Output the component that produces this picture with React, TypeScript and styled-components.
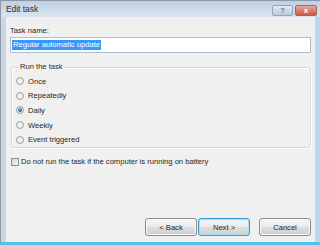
import styled, { createGlobalStyle } from "styled-components";

const GlobalStyle = createGlobalStyle`
  html, body {
    margin: 0;
    padding: 0;
  }
  body {
    width: 320px;
    height: 245px;
    overflow: hidden;
    background: #ffffff;
    font-family: "Liberation Sans", Arial, sans-serif;
  }
`;

const Window = styled.div`
  width: 320px;
  height: 245px;
  box-sizing: border-box;
  display: flex;
  flex-direction: column;
  background: linear-gradient(90deg, #c9d6e4 0%, #d3e0ee 60%, #bcd6ee 100%);
  border-top: 1px solid #8c99a8;
  border-left: 1px solid #8f9aa6;
  border-bottom: 3px solid #4fc4e9;
`;

const TitleBar = styled.div`
  height: 16px;
  display: flex;
  align-items: center;
  justify-content: space-between;
  padding: 0 3px 0 5px;
  background: linear-gradient(180deg, #c0d0e2 0%, #d8e4f1 100%);
`;

const Title = styled.span`
  font-size: 8.4px;
  color: #1e2a36;
`;

const CaptionButtons = styled.div`
  display: flex;
  gap: 2px;
  margin-top: 3px;
`;

const CaptionButton = styled.div<{ $close?: boolean }>`
  width: ${(p) => (p.$close ? 22 : 21)}px;
  height: 11px;
  box-sizing: border-box;
  border-radius: 2px;
  display: flex;
  align-items: center;
  justify-content: center;
  font-size: 8px;
  font-weight: bold;
  border: 1px solid ${(p) => (p.$close ? "#a5645a" : "#90a4ba")};
  color: ${(p) => (p.$close ? "#ffffff" : "#6a8299")};
  background: ${(p) =>
    p.$close
      ? "linear-gradient(180deg, #e7ab9f 0%, #d8806d 50%, #c85a45 100%)"
      : "linear-gradient(180deg, #e3ebf4 0%, #cbd9e8 50%, #bccde0 100%)"};
`;

const Client = styled.div`
  flex: 1;
  margin: 0 5px 0 5px;
  background: #f0f0f0;
  display: flex;
  flex-direction: column;
  padding: 0 4px 6px 4px;
  font-size: 7.6px;
  color: #262626;
`;

const FieldLabel = styled.div`
  margin-top: 9px;
  line-height: 10px;
`;

const TextBox = styled.div`
  margin-top: 1px;
  height: 16px;
  box-sizing: border-box;
  border: 1px solid #a9bfd3;
  background: #ffffff;
  display: flex;
  align-items: center;
  padding-left: 1px;
`;

const Selection = styled.span`
  background: #3399ff;
  color: #ffffff;
  line-height: 10px;
  padding: 0 1px;
`;

const Group = styled.fieldset`
  margin: 9px 0 0 1px;
  padding: 2px 0 0 4px;
  border: 1px solid #d5dadf;
  border-radius: 3px;
  box-shadow: inset 1px 1px 0 #ffffff, 1px 1px 0 #ffffff;
  min-width: 0;
`;

const Legend = styled.legend`
  padding: 0 1px;
  margin-left: 3px;
  line-height: 10px;
`;

const Option = styled.label`
  height: 14.6px;
  display: flex;
  align-items: center;
  gap: 4px;
`;

const Radio = styled.span<{ $checked?: boolean }>`
  width: 8px;
  height: 8px;
  box-sizing: border-box;
  border-radius: 50%;
  border: 1px solid #a3a3a3;
  background: radial-gradient(circle at 60% 60%, #f7f7f7 0%, #dcdcdc 100%);
  display: flex;
  align-items: center;
  justify-content: center;
  &::after {
    content: "";
    display: ${(p) => (p.$checked ? "block" : "none")};
    width: 4px;
    height: 4px;
    border-radius: 50%;
    background: radial-gradient(circle at 35% 35%, #6fb4dc 0%, #1b5a86 70%);
  }
`;

const CheckRow = styled.label`
  margin-top: 9px;
  margin-left: 1px;
  height: 10px;
  display: flex;
  align-items: center;
  gap: 2px;
`;

const Checkbox = styled.span`
  width: 8px;
  height: 8px;
  box-sizing: border-box;
  border: 1px solid #8f8f8f;
  background: linear-gradient(135deg, #d8d8d8 0%, #f4f4f4 100%);
`;

const Spacer = styled.div`
  flex: 1;
`;

const ButtonRow = styled.div`
  display: flex;
  justify-content: flex-end;
  gap: 1px;
`;

const Button = styled.div<{ $focused?: boolean; $gap?: boolean }>`
  width: 52px;
  height: 18px;
  box-sizing: border-box;
  margin-left: ${(p) => (p.$gap ? 8 : 0)}px;
  border: 1px solid ${(p) => (p.$focused ? "#3c9bd6" : "#8a8a8a")};
  border-radius: 3px;
  background: linear-gradient(180deg, #f4f4f4 0%, #ebebeb 48%, #dddddd 52%, #d0d0d0 100%);
  box-shadow: inset 0 0 0 1px ${(p) => (p.$focused ? "#a8dcf4" : "#fbfbfb")};
  display: flex;
  align-items: center;
  justify-content: center;
  color: #262626;
`;

const options = ["Once", "Repeatedly", "Daily", "Weekly", "Event triggered"];

export default function App() {
  return (
    <>
      <GlobalStyle />
      <Window>
        <TitleBar>
          <Title>Edit task</Title>
          <CaptionButtons>
            <CaptionButton>?</CaptionButton>
            <CaptionButton $close>x</CaptionButton>
          </CaptionButtons>
        </TitleBar>
        <Client>
          <FieldLabel>Task name:</FieldLabel>
          <TextBox>
            <Selection>Regular automatic update</Selection>
          </TextBox>
          <Group>
            <Legend>Run the task</Legend>
            {options.map((o) => (
              <Option key={o}>
                <Radio $checked={o === "Daily"} />
                {o}
              </Option>
            ))}
          </Group>
          <CheckRow>
            <Checkbox />
            Do not run the task if the computer is running on battery
          </CheckRow>
          <Spacer />
          <ButtonRow>
            <Button>&lt; Back</Button>
            <Button $focused>Next &gt;</Button>
            <Button $gap>Cancel</Button>
          </ButtonRow>
        </Client>
      </Window>
    </>
  );
}
